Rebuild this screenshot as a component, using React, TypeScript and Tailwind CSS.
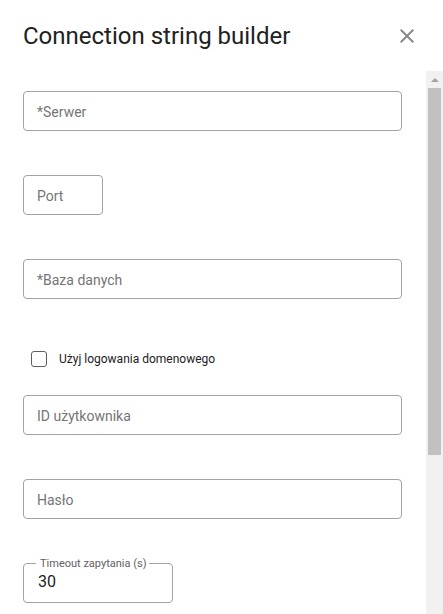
import React from "react";

const TextField = ({ label, className }: { label: string; className?: string }) => (
  <div
    className={`h-[40px] rounded-[4px] border border-[#a3a3a3] flex items-center px-[13px] pt-[2px] text-[14px] text-[#757575] ${className ?? ""}`}
  >
    {label}
  </div>
);

export default function App() {
  return (
    <div className="w-[443px] h-[614px] bg-white flex flex-col font-['Roboto',sans-serif] overflow-hidden">
      {/* Header */}
      <div className="h-[71px] shrink-0 flex items-start justify-between pt-[20px] pl-[23px] pr-[24px]">
        <h2 className="text-[24px] leading-8 text-[#212121]">Connection string builder</h2>
        <svg width="24" height="24" viewBox="0 0 24 24" className="mt-[4px] fill-[#8a8a8a]">
          <path d="M19 6.41L17.59 5 12 10.59 6.41 5 5 6.41 10.59 12 5 17.59 6.41 19 12 13.41 17.59 19 19 17.59 13.41 12z" />
        </svg>
      </div>

      {/* Body */}
      <div className="flex flex-1 min-h-0">
        <div className="flex-1 flex flex-col pt-[20px] pl-[23px] pr-[24px] overflow-hidden">
          <TextField label="*Serwer" />
          <TextField label="Port" className="w-[80px] mt-[44px]" />
          <TextField label="*Baza danych" className="mt-[44px]" />

          <label className="flex items-center gap-[12px] ml-[8px] mt-[52px] h-[16px]">
            <span className="w-[16px] h-[16px] rounded-[3px] border-[1.5px] border-[#5f5f5f]" />
            <span className="text-[12px] text-[#212121]">Użyj logowania domenowego</span>
          </label>

          <TextField label="ID użytkownika" className="mt-[28px]" />
          <TextField label="Hasło" className="mt-[44px]" />

          <div className="relative mt-[44px] w-[150px] h-[40px] shrink-0 rounded-[4px] border border-[#a3a3a3] flex items-center px-[14px]">
            <span className="absolute -top-[7px] left-[12px] bg-white pl-[4px] pr-[3px] text-[11px] leading-[14px] text-[#616161]">
              Timeout zapytania (s)
            </span>
            <span className="text-[16px] text-[#212121] -mt-[2px]">30</span>
          </div>
        </div>

        {/* Scrollbar */}
        <div className="w-[17px] shrink-0 bg-[#f1f1f1] flex flex-col items-center">
          <div className="h-[17px] w-full flex items-center justify-center">
            <div className="w-0 h-0 border-l-[4px] border-r-[4px] border-b-[4px] border-l-transparent border-r-transparent border-b-[#a3a3a3]" />
          </div>
          <div className="w-[13px] h-[367px] bg-[#c1c1c1]" />
        </div>
      </div>
    </div>
  );
}
